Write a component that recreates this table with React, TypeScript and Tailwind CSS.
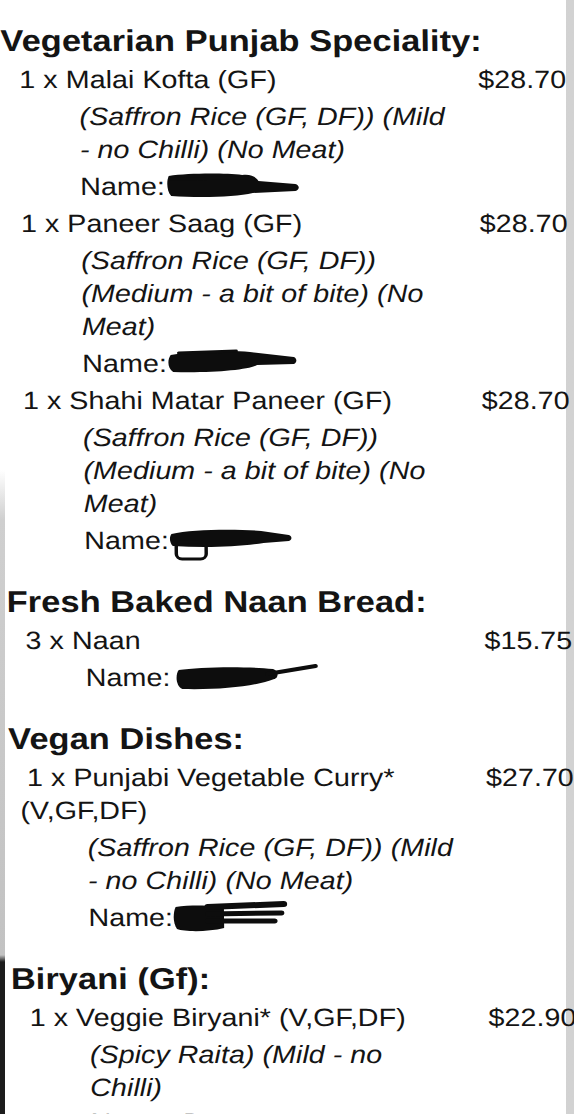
import React from "react";

type Shape =
  | { kind: "fill"; d: string }
  | { kind: "stroke"; d: string; w: number }
  | { kind: "rect"; x: number; y: number; w: number; h: number; r: number; sw: number };

function Scribble({ width, shapes, gap = 0 }: { width: number; shapes: Shape[]; gap?: number }) {
  return (
    <svg
      width={width}
      height={30}
      viewBox={`0 0 ${width} 30`}
      className="overflow-visible shrink-0"
      style={{ marginLeft: gap }}
    >
      {shapes.map((s, i) => {
        if (s.kind === "fill") return <path key={i} d={s.d} fill="#0d0d0d" />;
        if (s.kind === "stroke")
          return (
            <path
              key={i}
              d={s.d}
              fill="none"
              stroke="#0d0d0d"
              strokeWidth={s.w}
              strokeLinecap="round"
              strokeLinejoin="round"
            />
          );
        return (
          <rect
            key={i}
            x={s.x}
            y={s.y}
            width={s.w}
            height={s.h}
            rx={s.r}
            fill="none"
            stroke="#0d0d0d"
            strokeWidth={s.sw}
          />
        );
      })}
    </svg>
  );
}

const scribbles: { width: number; gap: number; shapes: Shape[] }[] = [
  {
    width: 116,
    gap: 1,
    shapes: [
      { kind: "fill", d: "M2 5 C 20 2 50 2 66 4 C 74 3 78 6 80 10 L 112 13 C 116 14 116 19 112 20 L 75 22 C 60 26 30 27 4 25 C 0 20 0 10 2 5 Z" },
      { kind: "stroke", d: "M4 8 L 70 7", w: 3 },
    ],
  },
  {
    width: 112,
    gap: 0,
    shapes: [
      { kind: "fill", d: "M3 7 C 25 3 55 2 72 4 L 110 9 C 113 10 113 15 110 16 L 78 17 C 70 22 40 25 5 24 C 0 20 0 12 3 7 Z" },
      { kind: "stroke", d: "M10 5 L 60 3", w: 3 },
    ],
  },
  {
    width: 106,
    gap: 0,
    shapes: [
      { kind: "fill", d: "M2 9 C 20 4 60 4 80 6 L 104 10 C 107 11 107 15 104 16 L 82 18 C 60 22 30 23 3 21 C 0 17 0 12 2 9 Z" },
      { kind: "rect", x: 6, y: 17, w: 26, h: 17, r: 5, sw: 3 },
    ],
  },
  {
    width: 124,
    gap: 4,
    shapes: [
      { kind: "fill", d: "M3 8 C 20 5 60 4 85 7 C 90 9 90 15 86 17 C 70 24 40 28 6 27 C 0 24 0 12 3 8 Z" },
      { kind: "stroke", d: "M80 12 L 122 4", w: 4 },
    ],
  },
  {
    width: 98,
    gap: 0,
    shapes: [
      { kind: "fill", d: "M2 5 C 15 3 35 3 44 6 L 44 26 C 30 30 10 30 3 27 C -1 20 0 10 2 5 Z" },
      { kind: "stroke", d: "M30 5 L 96 2", w: 6 },
      { kind: "stroke", d: "M30 12 L 94 11", w: 5 },
      { kind: "stroke", d: "M30 19 L 88 19", w: 5 },
    ],
  },
];

function Heading({ children, first = false }: { children: React.ReactNode; first?: boolean }) {
  return (
    <div
      className={`h-[36px] leading-[36px] text-[30px] font-bold whitespace-nowrap ${
        first ? "" : "mt-[27.5px]"
      }`}
    >
      {children}
    </div>
  );
}

function Item({ lines, price, first = false }: { lines: string[]; price: string; first?: boolean }) {
  return (
    <div className={`flex ${first ? "mt-[3.5px]" : "mt-[4px]"}`}>
      <div className="w-[415px] shrink-0 pl-[10px] text-[25px] leading-[33px] whitespace-nowrap">
        {lines.map((l, i) => (
          <div key={i} className={i === 0 ? "indent-[6px]" : ""}>
            {l}
          </div>
        ))}
      </div>
      <div className="w-[90px] shrink-0 text-[25px] leading-[33px] whitespace-nowrap">{price}</div>
    </div>
  );
}

function Mods({ lines }: { lines: string[] }) {
  return (
    <div className="ml-[68px] mt-[4px] italic text-[25px] leading-[33px] whitespace-nowrap">
      {lines.map((l, i) => (
        <div key={i}>{l}</div>
      ))}
    </div>
  );
}

function Name({ idx, space = false, tail }: { idx?: number; space?: boolean; tail?: string }) {
  const s = idx !== undefined ? scribbles[idx] : undefined;
  return (
    <div className="ml-[68px] mt-[4px] flex items-center h-[33px] text-[25px] leading-[33px] whitespace-nowrap">
      <span>Name:{space ? "\u00a0" : ""}</span>
      {tail ? <span>{tail}</span> : null}
      {s ? <Scribble width={s.width} gap={s.gap} shapes={s.shapes} /> : null}
    </div>
  );
}

export default function App() {
  return (
    <div className="w-[574px] h-[1114px] overflow-hidden flex bg-[linear-gradient(to_right,#9a9a9a,#c9c9c9_30%,#d2d2d2)] font-['Liberation_Sans',Arial,sans-serif] text-[#141414]">
      <div className="w-[566px] h-full shrink-0 [background:linear-gradient(to_bottom,#ffffff_0px,#ffffff_470px,#cfcfcf_520px,#c2c2c2_955px,#1c1c1c_962px,#1c1c1c_100%)_0_0/5px_100%_no-repeat,#ffffff]">
        <div className="w-[520px] pt-[23px] origin-top-left [transform:scaleX(1.15)_skewX(0.55deg)]">
          <Heading first>Vegetarian Punjab Speciality:</Heading>
          <Item first lines={["1 x Malai Kofta (GF)"]} price="$28.70" />
          <Mods lines={["(Saffron Rice (GF, DF)) (Mild", "- no Chilli) (No Meat)"]} />
          <Name idx={0} />
          <Item lines={["1 x Paneer Saag (GF)"]} price="$28.70" />
          <Mods lines={["(Saffron Rice (GF, DF))", "(Medium - a bit of bite) (No", "Meat)"]} />
          <Name idx={1} />
          <Item lines={["1 x Shahi Matar Paneer (GF)"]} price="$28.70" />
          <Mods lines={["(Saffron Rice (GF, DF))", "(Medium - a bit of bite) (No", "Meat)"]} />
          <Name idx={2} />

          <Heading>Fresh Baked Naan Bread:</Heading>
          <Item first lines={["3 x Naan"]} price="$15.75" />
          <Name idx={3} />

          <Heading>Vegan Dishes:</Heading>
          <Item first lines={["1 x Punjabi Vegetable Curry*", "(V,GF,DF)"]} price="$27.70" />
          <Mods lines={["(Saffron Rice (GF, DF)) (Mild", "- no Chilli) (No Meat)"]} />
          <Name idx={4} />

          <Heading>Biryani (Gf):</Heading>
          <Item first lines={["1 x Veggie Biryani* (V,GF,DF)"]} price="$22.90" />
          <Mods lines={["(Spicy Raita) (Mild - no", "Chilli)"]} />
          <div className="-mt-[2px]">
            <Name space tail="D" />
          </div>
        </div>
      </div>
    </div>
  );
}
